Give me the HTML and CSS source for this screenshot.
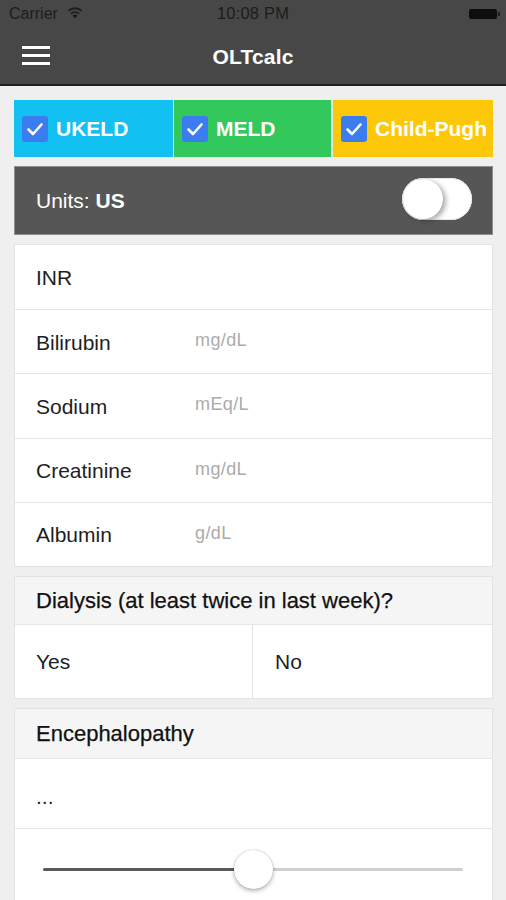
FILE: index.html
```html
<!DOCTYPE html>
<html lang="en">
<head>
<meta charset="utf-8">
<title>OLTcalc</title>
<link rel="stylesheet" href="styles.css">
</head>
<body>
<div class="status">
  <div class="status-left">
    <span class="carrier">Carrier</span>
    <svg class="wifi" width="16" height="12" viewBox="0 0 16 12">
      <path d="M8 11.5 L5.6 8.6 A3.6 3.6 0 0 1 10.4 8.6 Z" fill="#1c1c1c"/>
      <path d="M3.9 6.6 A6.2 6.2 0 0 1 12.1 6.6" fill="none" stroke="#1c1c1c" stroke-width="1.8"/>
      <path d="M1.4 3.9 A9.6 9.6 0 0 1 14.6 3.9" fill="none" stroke="#1c1c1c" stroke-width="1.8"/>
    </svg>
  </div>
  <div class="time">10:08 PM</div>
  <div class="status-right">
    <span class="battery"><span class="battery-tip"></span></span>
  </div>
</div>
<header class="nav">
  <div class="nav-left">
    <span class="burger"><span></span><span></span><span></span></span>
  </div>
  <h1 class="title">OLTcalc</h1>
  <div></div>
</header>
<main class="content">
  <div class="scores">
    <div class="score score-ukeld"><span class="check"><svg viewBox="0 0 26 26" width="26" height="26"><path d="M6.5 13.5 L11 18 L19.5 8.5" fill="none" stroke="#fff" stroke-width="2.6" stroke-linecap="round" stroke-linejoin="round"/></svg></span>UKELD</div>
    <div class="score score-meld"><span class="check"><svg viewBox="0 0 26 26" width="26" height="26"><path d="M6.5 13.5 L11 18 L19.5 8.5" fill="none" stroke="#fff" stroke-width="2.6" stroke-linecap="round" stroke-linejoin="round"/></svg></span>MELD</div>
    <div class="score score-cp"><span class="check"><svg viewBox="0 0 26 26" width="26" height="26"><path d="M6.5 13.5 L11 18 L19.5 8.5" fill="none" stroke="#fff" stroke-width="2.6" stroke-linecap="round" stroke-linejoin="round"/></svg></span>Child-Pugh</div>
  </div>

  <div class="units">
    <span class="units-label">Units: <b>US</b></span>
    <span class="switch"><span class="knob"></span></span>
  </div>

  <section class="card inputs">
    <div class="row"><span class="label">INR</span><span class="unit"></span></div>
    <div class="row"><span class="label">Bilirubin</span><span class="unit">mg/dL</span></div>
    <div class="row"><span class="label">Sodium</span><span class="unit">mEq/L</span></div>
    <div class="row"><span class="label">Creatinine</span><span class="unit">mg/dL</span></div>
    <div class="row"><span class="label">Albumin</span><span class="unit">g/dL</span></div>
  </section>

  <section class="card dialysis">
    <div class="card-head">Dialysis (at least twice in last week)?</div>
    <div class="options">
      <div class="option">Yes</div>
      <div class="option">No</div>
    </div>
  </section>

  <section class="card enceph">
    <div class="card-head tall">Encephalopathy</div>
    <div class="value-row">...</div>
    <div class="slider-row">
      <div class="slider">
        <span class="fill" style="width:50%"></span>
        <span class="thumb" style="left:50%"></span>
      </div>
    </div>
  </section>
</main>
</body>
</html>
```

FILE: styles.css
```css
* { box-sizing: border-box; }

html, body {
  margin: 0;
  padding: 0;
}

body {
  width: 506px;
  height: 900px;
  overflow: hidden;
  background: #efefef;
  font-family: "Liberation Sans", Arial, sans-serif;
  color: #1a1a1a;
}

/* status bar */
.status {
  height: 27px;
  background: #474747;
  display: grid;
  grid-template-columns: 1fr auto 1fr;
  align-items: center;
  color: #1c1c1c;
  font-size: 16px;
}
.status-left {
  display: flex;
  align-items: center;
  padding-left: 9px;
  gap: 9px;
}
.wifi { display: block; margin-top: -1px; }
.time { font-size: 16.5px; letter-spacing: 0.2px; }
.status-right {
  display: flex;
  justify-content: flex-end;
  padding-right: 9px;
}
.battery {
  position: relative;
  display: block;
  width: 28px;
  height: 10px;
  background: #0d0d0d;
  border-radius: 2px;
  margin-top: 1px;
}
.battery-tip {
  position: absolute;
  right: -3px;
  top: 3px;
  width: 2px;
  height: 4px;
  background: #1a1a1a;
  border-radius: 0 1px 1px 0;
}

/* nav */
.nav {
  height: 59px;
  background: #474747;
  border-bottom: 2px solid #1f1f1f;
  display: grid;
  grid-template-columns: 1fr auto 1fr;
  align-items: center;
}
.nav-left { padding-left: 22px; }
.burger {
  display: flex;
  flex-direction: column;
  gap: 5px;
  width: 28px;
}
.burger span {
  display: block;
  height: 3px;
  background: #fff;
  box-shadow: 0 0 1px rgba(0,0,0,0.6);
}
.title {
  margin: 2px 0 0;
  font-size: 21px;
  font-weight: bold;
  color: #fff;
  letter-spacing: 0.2px;
}

/* content */
.content {
  padding: 14px 13px 0 14px;
  display: flex;
  flex-direction: column;
  gap: 9px;
}

.scores {
  display: grid;
  grid-template-columns: 159px 157px 1fr;
  gap: 1px;
  height: 57px;
  background: #e2efe6;
}
.score {
  display: flex;
  align-items: center;
  padding-left: 8px;
  gap: 8px;
  color: #fff;
  font-weight: bold;
  font-size: 21px;
  white-space: nowrap;
  overflow: hidden;
}
.score-ukeld { background: #12c0f1; }
.score-meld { background: #33c85c; }
.score-cp { background: #fec80a; margin-left: 1px; }
.check {
  flex: none;
  width: 26px;
  height: 26px;
  border-radius: 3px;
  background: #3b7cee;
  display: block;
}
.check svg { display: block; }

.units {
  height: 69px;
  background: #565656;
  border: 1px solid #8e8e8e;
  display: flex;
  align-items: center;
  justify-content: space-between;
  padding: 0 20px 0 21px;
  color: #fff;
  font-size: 21px;
}
.units-label b { font-weight: bold; }
.switch {
  position: relative;
  display: block;
  width: 70px;
  height: 42px;
  border-radius: 21px;
  background: #fff;
  margin-top: -3px;
  box-shadow: inset 0 0 0 1px #e8e8e8;
}
.knob {
  position: absolute;
  left: 1px;
  top: 1px;
  width: 40px;
  height: 40px;
  border-radius: 50%;
  background: #fff;
  box-shadow: 3px 2px 5px rgba(0,0,0,0.32), 0 0 1px rgba(0,0,0,0.2);
}

.card {
  background: #fff;
  border: 1px solid #e3e3e3;
}

.row {
  height: 64.2px;
  display: flex;
  align-items: center;
  padding-left: 21px;
  padding-top: 2px;
  font-size: 21px;
}
.row + .row { border-top: 1px solid #e6e6e6; }
.label { width: 159px; color: #1e1e1e; }
.unit {
  font-size: 18px;
  color: #ababab;
  margin-top: -4px;
  letter-spacing: 0.4px;
}

.card-head {
  height: 48px;
  background: #f5f5f5;
  border-bottom: 1px solid #e6e6e6;
  display: flex;
  align-items: center;
  padding-left: 21px;
  padding-top: 2px;
  font-size: 22px;
  color: #111;
  -webkit-text-stroke: 0.25px #111;
}
.card-head.tall { height: 50px; }

.options {
  display: grid;
  grid-template-columns: 237px 1fr;
  height: 73px;
}
.option {
  display: flex;
  align-items: center;
  padding-left: 21px;
  padding-top: 2px;
  font-size: 21px;
  color: #222;
}
.option + .option {
  border-left: 1px solid #e3e3e3;
  padding-left: 22px;
}

.value-row {
  height: 70px;
  display: flex;
  align-items: center;
  padding-left: 21px;
  padding-top: 8px;
  font-size: 21px;
  color: #222;
  border-bottom: 1px solid #e6e6e6;
}

.slider-row {
  height: 90px;
  padding: 39px 29px 0 28px;
}
.slider {
  position: relative;
  height: 3px;
  background: #cfcfcf;
  border-radius: 2px;
}
.fill {
  position: absolute;
  left: 0;
  top: 0;
  height: 3px;
  background: #5a5a5a;
  border-radius: 2px;
}
.thumb {
  position: absolute;
  top: 50%;
  width: 39px;
  height: 39px;
  margin: -19px 0 0 -19px;
  border-radius: 50%;
  background: #fff;
  box-shadow: 0 2px 4px rgba(0,0,0,0.3), 0 0 1px rgba(0,0,0,0.3);
}
```
